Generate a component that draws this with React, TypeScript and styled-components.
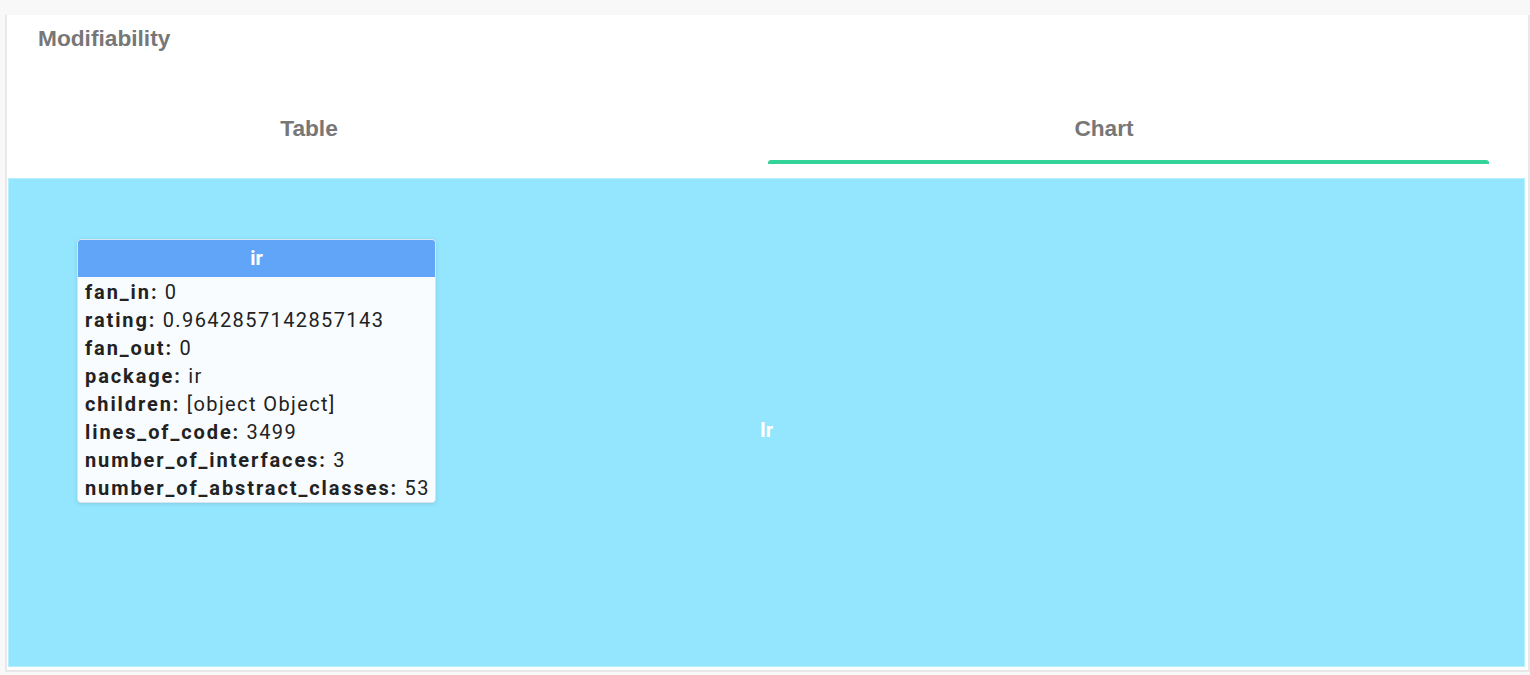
import React from 'react';
import styled, {createGlobalStyle} from 'styled-components';

const rows: [string, string][] = [
  ['fan_in', '0'],
  ['rating', '0.9642857142857143'],
  ['fan_out', '0'],
  ['package', 'ir'],
  ['children', '[object Object]'],
  ['lines_of_code', '3499'],
  ['number_of_interfaces', '3'],
  ['number_of_abstract_classes', '53'],
];

export default function App() {
  return (
    <>
      <GlobalStyle />
      <Card>
        <Title>Modifiability</Title>
        <Tabs>
          <Tab>
            <TabLabel shift={157}>Table</TabLabel>
          </Tab>
          <Tab>
            <TabLabel shift={88}>Chart</TabLabel>
            <Indicator />
          </Tab>
        </Tabs>
        <ChartArea>
          <NodeLabel>Ir</NodeLabel>
          <Tooltip>
            <TooltipHeader>ir</TooltipHeader>
            <TooltipBody>
              {rows.map(([key, value]) => (
                <Row key={key}>
                  <Key>{key}:</Key> {value}
                </Row>
              ))}
            </TooltipBody>
          </Tooltip>
        </ChartArea>
      </Card>
    </>
  );
}

const GlobalStyle = createGlobalStyle`
  body {
    margin: 0;
    background: #f8f8f8;
    font-family: 'Liberation Sans', Arial, sans-serif;
  }
`;

const Card = styled.section`
  margin: 15px 0 0 5px;
  width: 1525px;
  box-sizing: border-box;
  background: #ffffff;
  border: 2px solid #e8e8e8;
  border-top: none;
  padding-bottom: 3px;
`;

const Title = styled.h2`
  margin: 0;
  padding: 10px 0 0 31px;
  font-size: 22.7px;
  line-height: 26px;
  font-weight: 700;
  color: #777777;
`;

const Tabs = styled.div`
  display: grid;
  grid-template-columns: 761px 1fr;
  padding-top: 64px;
`;

const Tab = styled.div`
  display: flex;
  flex-direction: column;
`;

const TabLabel = styled.div<{shift: number}>`
  padding-right: ${(p) => p.shift}px;
  text-align: center;
  font-size: 22.7px;
  line-height: 26px;
  font-weight: 700;
  color: #777777;
`;

const Indicator = styled.div`
  width: 721px;
  height: 4px;
  margin-top: 19px;
  background: #34d399;
  border-radius: 3px 3px 0 0;
`;

const ChartArea = styled.div`
  position: relative;
  margin: 14px 3px 0 1px;
  height: 489px;
  box-sizing: border-box;
  background: #93e6fe;
  border: 1px solid #b6f0ff;
  display: flex;
  align-items: center;
  justify-content: center;
`;

const NodeLabel = styled.div`
  margin-top: 15px;
  font-family: Roboto, 'Liberation Sans', sans-serif;
  font-size: 20px;
  font-weight: 700;
  color: #ffffff;
`;

const Tooltip = styled.div`
  position: absolute;
  left: 68px;
  top: 60px;
  width: 359px;
  box-sizing: border-box;
  background: #f9fcff;
  border: 1px solid #d9e6ee;
  border-radius: 4px;
  overflow: hidden;
  box-shadow: 0 1px 4px rgba(0, 0, 0, 0.12);
`;

const TooltipHeader = styled.div`
  height: 37px;
  background: #61a5f9;
  color: #ffffff;
  font-family: Roboto, 'Liberation Sans', sans-serif;
  font-size: 20px;
  font-weight: 700;
  line-height: 37px;
  text-align: center;
`;

const TooltipBody = styled.div`
  padding: 1px 0 0 7px;
`;

const Row = styled.div`
  font-family: Roboto, 'Liberation Sans', sans-serif;
  font-size: 20px;
  letter-spacing: 1.4px;
  line-height: 28px;
  color: #222222;
  white-space: nowrap;
`;

const Key = styled.span`
  font-weight: 700;
  letter-spacing: 1.9px;
`;
